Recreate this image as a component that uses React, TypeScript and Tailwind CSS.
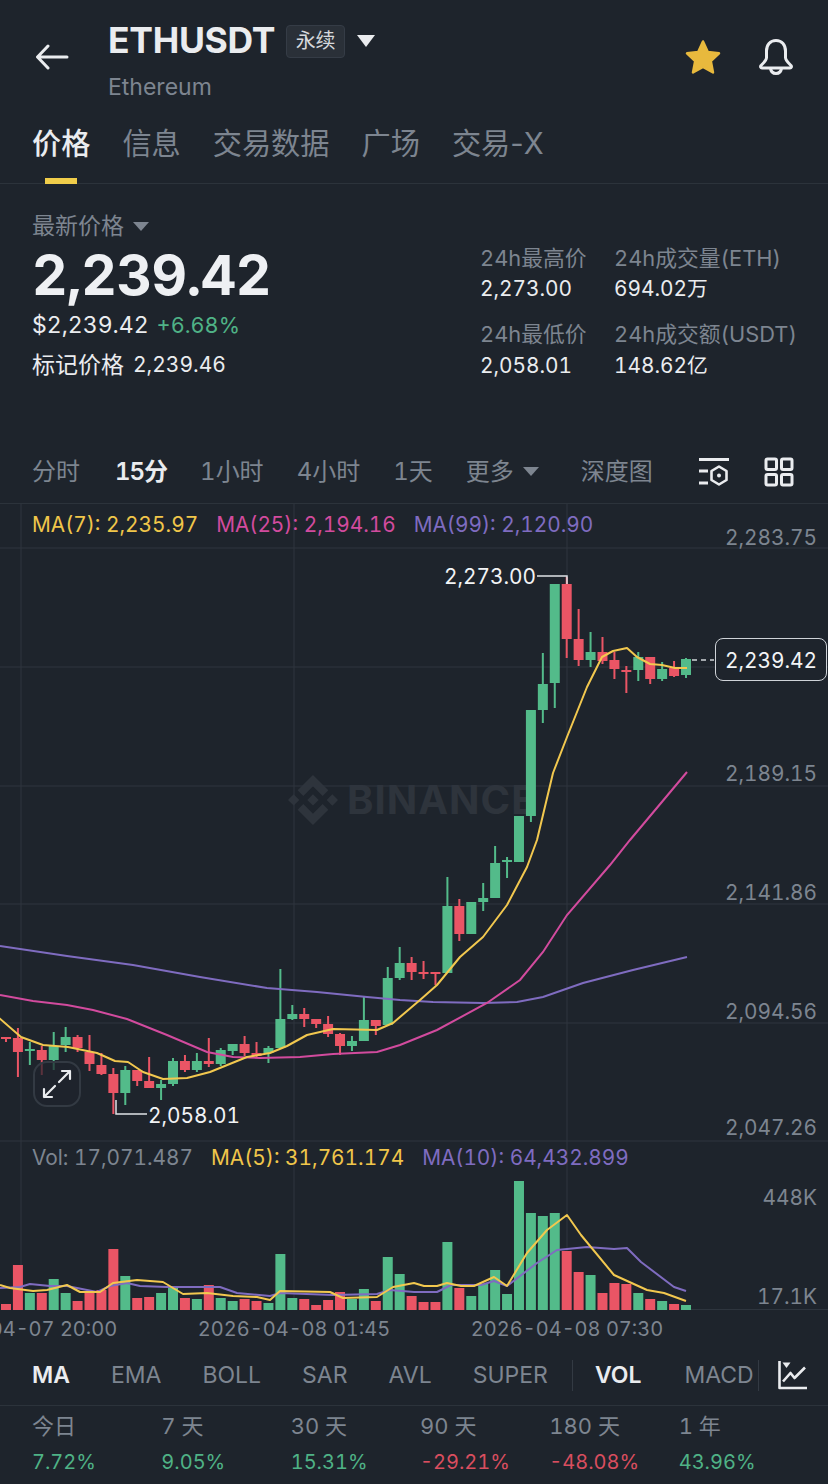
import { SiBinance } from 'react-icons/si';

// k = 0 is the newest candle; [green, bodyTop, bodyBottom, wickTop, wickBottom, volumeTop]
const candles: [boolean, number, number, number, number, number][] = [
  [true, 659, 675, 658, 678, 1305],
  [false, 668, 676, 661, 677, 1304],
  [true, 669, 679, 662, 681, 1301],
  [false, 657, 679, 657, 684, 1299],
  [true, 657, 670, 652, 681, 1293],
  [false, 670, 671, 666, 693, 1284],
  [false, 660, 669, 652, 679, 1283],
  [false, 652, 661, 637, 664, 1293],
  [true, 652, 660, 632, 667, 1275],
  [false, 639, 660, 609, 666, 1272],
  [false, 584, 639, 577, 658, 1251],
  [true, 584, 683, 584, 708, 1213],
  [true, 684, 710, 653, 723, 1216],
  [true, 710, 816, 710, 822, 1213],
  [true, 816, 862, 816, 862, 1181],
  [true, 860, 862, 857, 878, 1294],
  [true, 863, 898, 846, 898, 1270],
  [true, 898, 902, 883, 911, 1284],
  [true, 902, 934, 902, 934, 1296],
  [false, 906, 934, 899, 941, 1288],
  [true, 906, 973, 877, 973, 1242],
  [false, 972, 974, 972, 985, 1302],
  [false, 972, 973, 961, 979, 1302],
  [false, 963, 972, 957, 980, 1296],
  [true, 963, 978, 947, 980, 1274],
  [true, 978, 1025, 967, 1026, 1257],
  [false, 1020, 1026, 1020, 1035, 1301],
  [true, 1020, 1041, 997, 1041, 1289],
  [true, 1041, 1046, 1036, 1051, 1299],
  [false, 1034, 1046, 1033, 1055, 1292],
  [false, 1024, 1034, 1016, 1037, 1300],
  [false, 1019, 1024, 1019, 1028, 1305],
  [false, 1014, 1019, 1008, 1027, 1299],
  [true, 1014, 1019, 1005, 1020, 1298],
  [true, 1019, 1048, 969, 1048, 1254],
  [true, 1048, 1053, 1046, 1063, 1303],
  [false, 1053, 1056, 1042, 1057, 1301],
  [false, 1044, 1053, 1036, 1056, 1299],
  [true, 1044, 1051, 1044, 1055, 1301],
  [true, 1050, 1064, 1048, 1066, 1298],
  [false, 1061, 1064, 1038, 1067, 1285],
  [true, 1061, 1070, 1053, 1072, 1299],
  [false, 1061, 1070, 1055, 1072, 1298],
  [true, 1061, 1084, 1058, 1086, 1288],
  [true, 1084, 1088, 1080, 1100, 1293],
  [false, 1081, 1088, 1057, 1088, 1297],
  [false, 1070, 1081, 1070, 1086, 1298],
  [true, 1070, 1093, 1066, 1105, 1276],
  [false, 1074, 1093, 1068, 1114, 1249],
  [false, 1065, 1074, 1053, 1075, 1290],
  [false, 1052, 1064, 1035, 1071, 1292],
  [false, 1037, 1048, 1035, 1052, 1301],
  [true, 1037, 1045, 1027, 1052, 1293],
  [true, 1046, 1060, 1032, 1070, 1279],
  [false, 1050, 1060, 1046, 1075, 1293],
  [true, 1049, 1051, 1042, 1065, 1293],
  [false, 1038, 1052, 1028, 1077, 1265],
  [false, 1037, 1038, 1037, 1042, 1304],
  [false, 1033, 1037, 1033, 1040, 1299],
];

const ma7 =
  '-2,1017 21,1037 43,1045 68,1047 97,1053 115,1061 128,1062 143,1072 163,1079 187,1078 210,1072 247,1057 270,1053 287,1046 307,1035 333,1029 377,1030 393,1023 400,1017 420,1000 437,985 460,957 483,937 507,905 527,867 537,840 553,773 567,737 587,687 602,657 613,651 627,648 637,657 650,664 662,665 675,668 687,668';
const ma25 =
  '0,995 33,1001 67,1005 93,1010 127,1019 167,1035 207,1052 233,1057 260,1058 300,1057 333,1054 377,1052 400,1045 437,1030 487,1003 520,980 543,952 567,915 610,865 630,840 687,772';
const ma99 =
  '0,946 67,956 133,965 200,977 267,988 317,992 367,997 400,1000 433,1002 483,1003 517,1002 543,997 583,983 633,970 687,957';
const volMa5 =
  '0,1285 10,1288 33,1291 47,1290 67,1285 80,1292 100,1292 113,1283 137,1280 163,1282 183,1294 207,1293 233,1296 257,1297 270,1300 280,1291 330,1292 343,1298 377,1297 393,1287 414,1283 424,1286 437,1286 447,1283 461,1286 474,1286 494,1277 507,1286 527,1253 547,1230 567,1215 581,1235 614,1275 647,1290 664,1293 686,1301';
const volMa10 =
  '0,1288 20,1287 30,1284 50,1286 67,1286 77,1288 97,1292 110,1286 127,1283 140,1286 167,1287 187,1287 220,1287 237,1293 270,1296 280,1293 333,1295 377,1294 390,1290 414,1292 437,1292 451,1285 481,1285 494,1281 507,1286 537,1263 557,1250 587,1247 614,1249 627,1248 641,1262 674,1287 686,1291';

const gridY = [548, 667, 786, 904, 1023, 1141];
const gridX = [21, 294, 567];

const priceAxis = [
  { label: '2,283.75', y: 'top-[20px]' },
  { label: '2,189.15', y: 'top-[256px]' },
  { label: '2,141.86', y: 'top-[375px]' },
  { label: '2,094.56', y: 'top-[494px]' },
  { label: '2,047.26', y: 'top-[610px]' },
  { label: '448K', y: 'top-[680px]' },
  { label: '17.1K', y: 'top-[779px]' },
];

const returns = [
  { label: '今日', value: '7.72%', up: true },
  { label: '7 天', value: '9.05%', up: true },
  { label: '30 天', value: '15.31%', up: true },
  { label: '90 天', value: '-29.21%', up: false },
  { label: '180 天', value: '-48.08%', up: false },
  { label: '1 年', value: '43.96%', up: true },
];

const Chart = () => (
  <svg viewBox="0 504 828 806" className="absolute inset-0 h-[806px] w-[828px]">
    {gridY.map((y) => (
      <line key={y} x1={0} x2={828} y1={y} y2={y} stroke="#2e353e" strokeWidth={1} />
    ))}
    {gridX.map((x) => (
      <line key={x} x1={x} x2={x} y1={504} y2={1310} stroke="#2e353e" strokeWidth={1} />
    ))}
    <line x1={690} x2={828} y1={1309.5} y2={1309.5} stroke="#2e353e" strokeWidth={1} />
    {candles.map(([green, top, bottom, wickTop, wickBottom, volTop], k) => {
      const x = 686 - 11.93 * k;
      const color = green ? '#53bb8a' : '#ea5565';
      return (
        <g key={k}>
          <rect x={x - 1} y={wickTop} width={2} height={wickBottom - wickTop} fill={color} />
          <rect x={x - 5} y={top} width={10} height={Math.max(bottom - top, 2)} fill={color} />
          <rect x={x - 5} y={volTop} width={10} height={1310 - volTop} fill={color} />
        </g>
      );
    })}
    <polyline points={ma99} fill="none" stroke="#7f6cc0" strokeWidth={2} />
    <polyline points={ma25} fill="none" stroke="#d24b9e" strokeWidth={2} />
    <polyline points={ma7} fill="none" stroke="#f2c84f" strokeWidth={2} strokeLinejoin="round" />
    <polyline points={volMa10} fill="none" stroke="#7f6cc0" strokeWidth={2} strokeLinejoin="round" />
    <polyline points={volMa5} fill="none" stroke="#f2c84f" strokeWidth={2} strokeLinejoin="round" />
    <path d="M537 576H567V584" fill="none" stroke="#dfe2e6" strokeWidth={1.5} />
    <path d="M116 1100V1114H147" fill="none" stroke="#dfe2e6" strokeWidth={1.5} />
    <line x1={692} x2={714} y1={660} y2={660} stroke="#cfd3d8" strokeWidth={1.5} strokeDasharray="5 4" />
  </svg>
);

export default function App() {
  return (
    <div className="flex h-[1484px] w-[828px] flex-col overflow-hidden bg-[#1e242c] font-['Inter','Noto_Sans_CJK_SC',sans-serif] tabular-nums text-[#eaecef]">
      {/* header */}
      <div className="flex h-[110px] items-start">
        <svg width="34" height="26" viewBox="0 0 34 26" className="ml-[35px] mt-[44px]" fill="none" stroke="#eaecef" strokeWidth="3" strokeLinecap="round" strokeLinejoin="round">
          <path d="M32 13H3M13 2 2.500 13 13 24" />
        </svg>
        <div className="ml-[39px] flex flex-col">
          <div className="mt-[20px] flex h-[42px] items-center">
            <span className="text-[35.500px] font-bold tracking-[-0.3px]">ETHUSDT</span>
            <span className="ml-[11px] flex h-[33px] w-[59px] items-center justify-center rounded-[4px] border border-[#353c46] bg-[#2a3038] text-[20px] text-[#d5d8dc]">永续</span>
            <span className="ml-[12px] h-0 w-0 border-x-[9px] border-t-[12px] border-x-transparent border-t-[#eaecef]" />
          </div>
          <span className="mt-[12px] text-[23px] leading-[26px] text-[#7d8590]">Ethereum</span>
        </div>
        <div className="ml-auto mr-[34px] mt-[38px] flex items-center gap-[36px]">
          <svg width="38" height="38" viewBox="0 0 38 38">
            <path d="M19 3.500 23.800 14 35 15.300 26.800 23 29 34.500 19 29 9 34.500 11.200 23 3 15.300 14.200 14Z" fill="#e8b93d" stroke="#e8b93d" strokeWidth="2.500" strokeLinejoin="round" />
          </svg>
          <svg width="36" height="38" viewBox="0 0 36 38" fill="none" stroke="#eaecef" strokeWidth="3" strokeLinejoin="round">
            <path d="M18 2.500c-6 0-9.500 4.500-9.500 10.500v6.500c0 3-3.500 6-5.500 8-.9 1-.3 2.500 1 2.500h28c1.300 0 1.900-1.500 1-2.500-2-2-5.500-5-5.500-8V13c0-6-3.500-10.500-9.500-10.500Z" />
            <path d="M12.500 30c.3 3.500 2.500 5.500 5.500 5.500s5.200-2 5.500-5.500" />
          </svg>
        </div>
      </div>

      {/* tabs */}
      <div className="flex h-[74px] items-start gap-[32px] border-b border-[#2c333b] px-[32px] text-[29.200px] text-[#7d8590] [font-variant-numeric:normal]">
        <div className="flex h-[74px] flex-col items-center">
          <span className="flex h-[68px] items-center font-medium text-[#eaecef]">价格</span>
          <span className="h-[6px] w-[32px] bg-[#f0cd4a]" />
        </div>
        <span className="flex h-[68px] items-center">信息</span>
        <span className="flex h-[68px] items-center">交易数据</span>
        <span className="flex h-[68px] items-center">广场</span>
        <span className="flex h-[68px] items-center">交易-X</span>
      </div>

      {/* price stats */}
      <div className="flex h-[256px] pl-[32px]">
        <div className="w-[448px] pt-[26px]">
          <div className="flex h-[32px] items-center text-[23px] text-[#7d8590]">
            最新价格
            <span className="ml-[9px] h-0 w-0 border-x-[8px] border-t-[9px] border-x-transparent border-t-[#7d8590]" />
          </div>
          <div className="flex h-[66px] items-center text-[55px] font-bold tracking-[-0.500px] text-[#eef0f3]">2,239.42</div>
          <div className="flex h-[34px] items-center gap-[8px]">
            <span className="text-[23px]">$2,239.42</span>
            <span className="text-[21.700px] text-[#4fb286]">+6.68%</span>
          </div>
          <div className="flex h-[46px] items-center gap-[9px]">
            <span className="text-[23px]">标记价格</span>
            <span className="text-[21px]">2,239.46</span>
          </div>
        </div>
        <div className="grid h-fit grid-cols-[134px_auto] pt-[59px] text-[20.800px]">
          <span className="h-[30px] text-[21.800px] leading-[30px] text-[#7d8590]">24h最高价</span>
          <span className="h-[30px] text-[21.800px] leading-[30px] text-[#7d8590]">24h成交量(ETH)</span>
          <span className="mb-[16px] h-[30px] leading-[32px]">2,273.00</span>
          <span className="mb-[16px] h-[30px] leading-[32px]">694.02万</span>
          <span className="h-[31px] text-[21.800px] leading-[30px] text-[#7d8590]">24h最低价</span>
          <span className="h-[31px] whitespace-nowrap text-[21.800px] leading-[30px] text-[#7d8590]">24h成交额(USDT)</span>
          <span className="h-[30px] leading-[32px]">2,058.01</span>
          <span className="h-[30px] leading-[32px]">148.62亿</span>
        </div>
      </div>

      {/* interval tabs */}
      <div className="flex h-[64px] items-center border-b border-[#2c333b] pl-[32px] pr-[34px] text-[24px] text-[#7d8590]">
        <div className="flex items-center gap-[33px]">
          <span>分时</span>
          <span className="ml-[2px] font-semibold tracking-[-1px] text-[#eaecef]">15分</span>
          <span>1小时</span>
          <span>4小时</span>
          <span>1天</span>
          <span className="flex items-center">
            更多
            <span className="ml-[9px] h-0 w-0 border-x-[8px] border-t-[9px] border-x-transparent border-t-[#7d8590]" />
          </span>
          <span className="ml-[9px]">深度图</span>
        </div>
        <svg width="32" height="30" viewBox="0 0 32 30" className="ml-auto" fill="none" stroke="#eaecef" strokeWidth="3">
          <path d="M1 2.500H31M1 14H10M1 26H10" />
          <path d="M21 9.500 28.500 14v9L21 27.500 13.500 23v-9Z" strokeWidth="2.600" strokeLinejoin="round" />
          <circle cx="21" cy="18.500" r="2" fill="#eaecef" stroke="none" />
        </svg>
        <svg width="30" height="30" viewBox="0 0 30 30" className="ml-[34px]" fill="none" stroke="#eaecef" strokeWidth="3">
          <rect x="2" y="2" width="10.500" height="10.500" rx="1.500" />
          <rect x="17.500" y="2" width="10.500" height="10.500" rx="1.500" />
          <rect x="2" y="17.500" width="10.500" height="10.500" rx="1.500" />
          <rect x="17.500" y="17.500" width="10.500" height="10.500" rx="1.500" />
        </svg>
      </div>

      {/* chart */}
      <div className="relative h-[805px] w-[828px] text-[20.800px]">
        <div className="absolute left-[288px] top-[271px] flex items-center gap-[9px] text-[#2e343c]">
          <SiBinance size={50} />
          <span className="text-[40px] font-bold leading-none tracking-[1px]">BINANCE</span>
        </div>
        <Chart />

        <div className="absolute left-[32px] top-[7px] flex gap-[18px] leading-[28px]">
          <span className="text-[#f0c64a]">MA(7): 2,235.97</span>
          <span className="text-[#d24b9e]">MA(25): 2,194.16</span>
          <span className="text-[#7f6cc0]">MA(99): 2,120.90</span>
        </div>
        <div className="absolute left-[32px] top-[640px] flex gap-[18px] leading-[28px]">
          <span className="text-[#7d8590]">Vol: 17,071.487</span>
          <span className="text-[#f0c64a]">MA(5): 31,761.174</span>
          <span className="text-[#7f6cc0]">MA(10): 64,432.899</span>
        </div>

        {priceAxis.map((item) => (
          <span key={item.label} className={`absolute right-[11px] leading-[28px] text-[#7d8590] ${item.y}`}>
            {item.label}
          </span>
        ))}

        <span className="absolute left-[444px] top-[59px] leading-[28px] text-[#f2f3f5]">2,273.00</span>
        <span className="absolute left-[148px] top-[598px] leading-[28px] text-[#f2f3f5]">2,058.01</span>
        <span className="absolute left-[715px] top-[134px] flex h-[43px] w-[112px] items-center justify-center rounded-[8px] border border-[#cfd3d8] bg-[#1e242c] pt-[2px] text-[#f2f3f5]">2,239.42</span>

        <div className="absolute left-[33px] top-[557px] flex h-[46px] w-[48px] items-center justify-center rounded-[14px] border-2 border-[#333a43] bg-[#1e242c]/70">
          <svg width="30" height="30" viewBox="0 0 30 30" fill="none" stroke="#eaecef" strokeWidth="2.200" strokeLinecap="round" strokeLinejoin="round">
            <path d="M17 13 28 2M20 2h8v8M13 17 2 28M10 28H2v-8" />
          </svg>
        </div>
      </div>

      {/* time axis */}
      <div className="relative h-[38px] text-[20px] leading-[41px] text-[#7d8590]">
        <span className="absolute left-[21px] -translate-x-1/2 whitespace-nowrap">2026-04-07 20:00</span>
        <span className="absolute left-[294px] -translate-x-1/2 whitespace-nowrap">2026-04-08 01:45</span>
        <span className="absolute left-[567px] -translate-x-1/2 whitespace-nowrap">2026-04-08 07:30</span>
      </div>

      {/* indicators */}
      <div className="flex h-[59px] items-center border-b border-[#2c333b] pb-[2px] pl-[32px] text-[23px] text-[#7d8590]">
        <div className="flex items-center gap-[41px]">
          <span className="font-semibold text-[#eaecef]">MA</span>
          <span>EMA</span>
          <span>BOLL</span>
          <span>SAR</span>
          <span>AVL</span>
          <span>SUPER</span>
        </div>
        <span className="ml-[24px] h-[31px] w-px bg-[#333a43]" />
        <span className="ml-[22px] font-semibold text-[#eaecef]">VOL</span>
        <span className="ml-[43px] w-[70px] overflow-hidden whitespace-nowrap">MACD</span>
        <span className="ml-[4px] h-[31px] w-px bg-[#333a43]" />
        <svg width="30" height="30" viewBox="0 0 30 30" className="ml-[19px]" fill="none" stroke="#eaecef" strokeWidth="2.600" strokeLinejoin="round">
          <path d="M1.500 1v27H29" />
          <path d="M5 21.500 12.500 13l4 5L27 7.500" />
          <path d="M4.500 2.500h8L8.500 8Z" fill="#eaecef" stroke="none" />
        </svg>
      </div>

      {/* returns */}
      <div className="grid w-[808px] grid-cols-6 pl-[32px]">
        {returns.map((item) => (
          <div key={item.label} className="flex flex-col">
            <span className="mt-[5px] h-[30px] text-[22px] leading-[30px] text-[#7d8590]">{item.label}</span>
            <span className={`mt-[7px] h-[28px] text-[20px] leading-[28px] ${item.up ? 'text-[#4fb286]' : 'text-[#d94e5f]'}`}>{item.value}</span>
          </div>
        ))}
      </div>
    </div>
  );
}
